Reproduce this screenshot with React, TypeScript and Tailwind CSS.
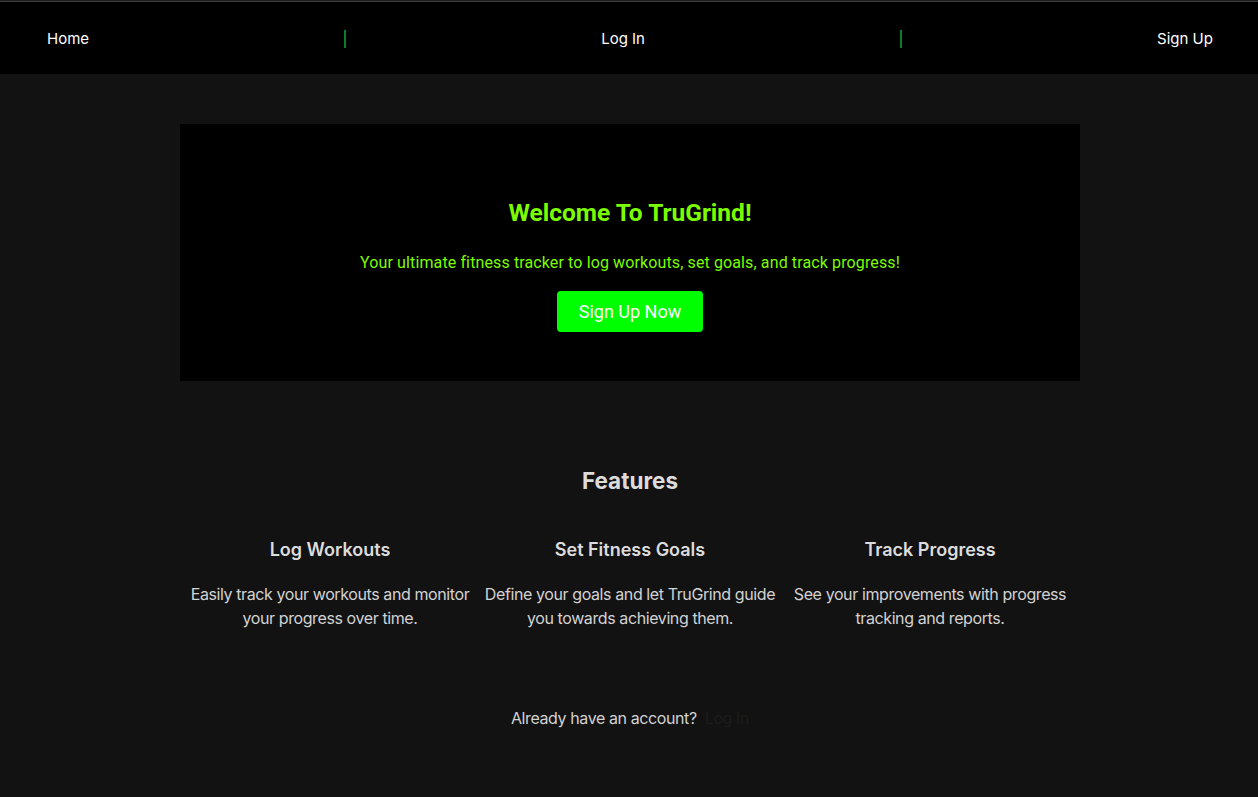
export default function App() {
  const features = [
    {
      title: 'Log Workouts',
      text: 'Easily track your workouts and monitor your progress over time.',
    },
    {
      title: 'Set Fitness Goals',
      text: 'Define your goals and let TruGrind guide you towards achieving them.',
    },
    {
      title: 'Track Progress',
      text: 'See your improvements with progress tracking and reports.',
    },
  ];

  return (
    <div className="min-h-[797px] bg-[#121212] font-['Inter',sans-serif]">
      <div className="h-px bg-[#1c1c1c]" />
      <nav className="h-[73px] border-t border-[#3f3f3f] bg-black flex items-center justify-between pl-[47px] pr-[45px] pt-[2px] font-['Inter',sans-serif] text-[15px] text-white">
        <a href="#">Home</a>
        <span className="text-[#22c03c]">|</span>
        <a href="#">Log In</a>
        <span className="text-[#22c03c]">|</span>
        <a href="#">Sign Up</a>
      </nav>

      <main className="w-[900px] mx-auto translate-x-[1px]">
        <section className="mt-[50px] bg-black pt-[73px] pb-[49px] flex flex-col items-center font-['Roboto',sans-serif]">
          <h1 className="text-[24.5px] leading-[32px] font-bold text-[#7cfc00]">Welcome To TruGrind!</h1>
          <p className="mt-[22px] text-[16px] leading-[24px] tracking-[0.12px] text-[#7cfc00]">
            Your ultimate fitness tracker to log workouts, set goals, and track progress!
          </p>
          <button className="mt-[16px] h-[41px] w-[146px] rounded-[4px] bg-[#00ff00] text-white text-[18px]">
            Sign Up Now
          </button>
        </section>

        <section className="mt-[86px] text-center">
          <h2 className="text-[22.5px] leading-[28px] font-bold text-[#dcdcdc]">Features</h2>
          <div className="mt-[43px] grid grid-cols-3">
            {features.map((f) => (
              <div key={f.title}>
                <h3 className="text-[18px] leading-[24px] font-semibold text-[#dcdcdc]">{f.title}</h3>
                <p className="mt-[20px] text-[16px] leading-[24px] tracking-[-0.4px] text-[#d2d2d2]">{f.text}</p>
              </div>
            ))}
          </div>
        </section>

        <p className="mt-[76px] text-center text-[16px] leading-[24px] tracking-[-0.4px] text-[#d2d2d2]">
          Already have an account? <a href="#" className="ml-[4px] text-[#1c1c1c]">Log In</a>
        </p>
      </main>
    </div>
  );
}
